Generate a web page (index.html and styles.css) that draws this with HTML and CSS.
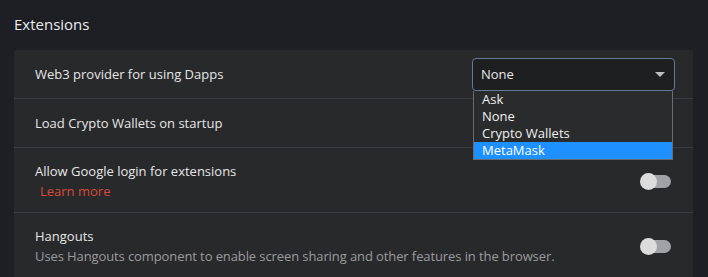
FILE: index.html
```html
<!DOCTYPE html>
<html lang="en">
<head>
    <meta charset="UTF-8">
    <title>Settings - Extensions</title>
    <link rel="stylesheet" href="styles.css">
</head>
<body>
    <div class="page">
        <h2 class="section-title">Extensions</h2>
        <div class="card">
            <div class="row row-short">
                <div class="row-label">Web3 provider for using Dapps</div>
                <div class="select-wrap">
                    <div class="select">
                        <span>None</span>
                        <span class="arrow"></span>
                    </div>
                    <ul class="options">
                        <li>Ask</li>
                        <li>None</li>
                        <li>Crypto Wallets</li>
                        <li class="selected">MetaMask</li>
                    </ul>
                </div>
            </div>
            <div class="row row-short">
                <div class="row-label">Load Crypto Wallets on startup</div>
            </div>
            <div class="row">
                <div class="row-text">
                    <div class="row-label">Allow Google login for extensions</div>
                    <a class="learn-more" href="#">Learn more</a>
                </div>
                <div class="toggle"><span class="knob"></span></div>
            </div>
            <div class="row">
                <div class="row-text">
                    <div class="row-label">Hangouts</div>
                    <div class="row-desc">Uses Hangouts component to enable screen sharing and other features in the browser.</div>
                </div>
                <div class="toggle"><span class="knob"></span></div>
            </div>
        </div>
    </div>
</body>
</html>
```

FILE: styles.css
```css
:root {
    --bg-color: #1d1f25;
    --card-color: #28292b;
    --line-color: #3a3b3e;
    --text-color: #e6e6e6;
    --muted-color: #9b9c9e;
    --link-color: #d8493b;
    --accent-color: #1e90ff;
}
body {
    font-family: 'Open Sans', sans-serif;
    background-color: var(--bg-color);
    color: var(--text-color);
    margin: 0;
    padding: 0;
    overflow: hidden;
}
.page {
    padding: 0 15px 0 14px;
}
.section-title {
    font-size: 15px;
    font-weight: 400;
    color: #ececec;
    margin: 0;
    padding: 12px 0 13px;
    line-height: 25px;
}
.card {
    background-color: var(--card-color);
    border-radius: 3px 3px 0 0;
}
.row {
    display: flex;
    align-items: center;
    justify-content: space-between;
    padding: 0 22px 0 21px;
    height: 64px;
    border-bottom: 1px solid var(--line-color);
}
.row-short {
    height: 48px;
}
.row:last-child {
    border-bottom: none;
}
.row-label {
    font-size: 13px;
    font-weight: 500;
    line-height: 20px;
}
.row-text {
    margin-top: 1px;
}
.row-desc {
    font-size: 13px;
    line-height: 20px;
    color: var(--muted-color);
    letter-spacing: -0.1px;
}
.learn-more {
    display: block;
    font-size: 13px;
    line-height: 20px;
    color: var(--link-color);
    text-decoration: none;
    padding-left: 5px;
}

/* Select & dropdown */
.select-wrap {
    position: relative;
    margin-right: -4px;
}
.select {
    display: flex;
    align-items: center;
    justify-content: space-between;
    width: 184px;
    height: 31px;
    padding: 0 9px 0 8px;
    background-color: #1e1f21;
    border: 1px solid #6b7894;
    border-radius: 4px;
    font-size: 13px;
}
.arrow {
    width: 0;
    height: 0;
    border-left: 5px solid transparent;
    border-right: 5px solid transparent;
    border-top: 5px solid #bdbdbd;
}
.options {
    position: absolute;
    top: 33px;
    left: 1px;
    width: 198px;
    margin: 0;
    padding: 0;
    list-style: none;
    background-color: #2a2b2d;
    border: 1px solid #6a6b6e;
    border-top: none;
    font-size: 13px;
    z-index: 2;
}
.options li {
    height: 17px;
    line-height: 17px;
    padding: 0 8px;
    color: #f0f0f0;
}
.options li.selected {
    background-color: var(--accent-color);
    color: #fff;
}

/* Toggle */
.toggle {
    position: relative;
    width: 31px;
    height: 17px;
    margin-top: 2px;
}
.toggle::before {
    content: '';
    position: absolute;
    left: 3px;
    right: 0;
    top: 2px;
    height: 13px;
    border-radius: 7px;
    background-color: #a0a2a5;
}
.knob {
    position: absolute;
    left: 0;
    top: 0;
    width: 17px;
    height: 17px;
    border-radius: 50%;
    background-color: #dcdcdc;
}
```
